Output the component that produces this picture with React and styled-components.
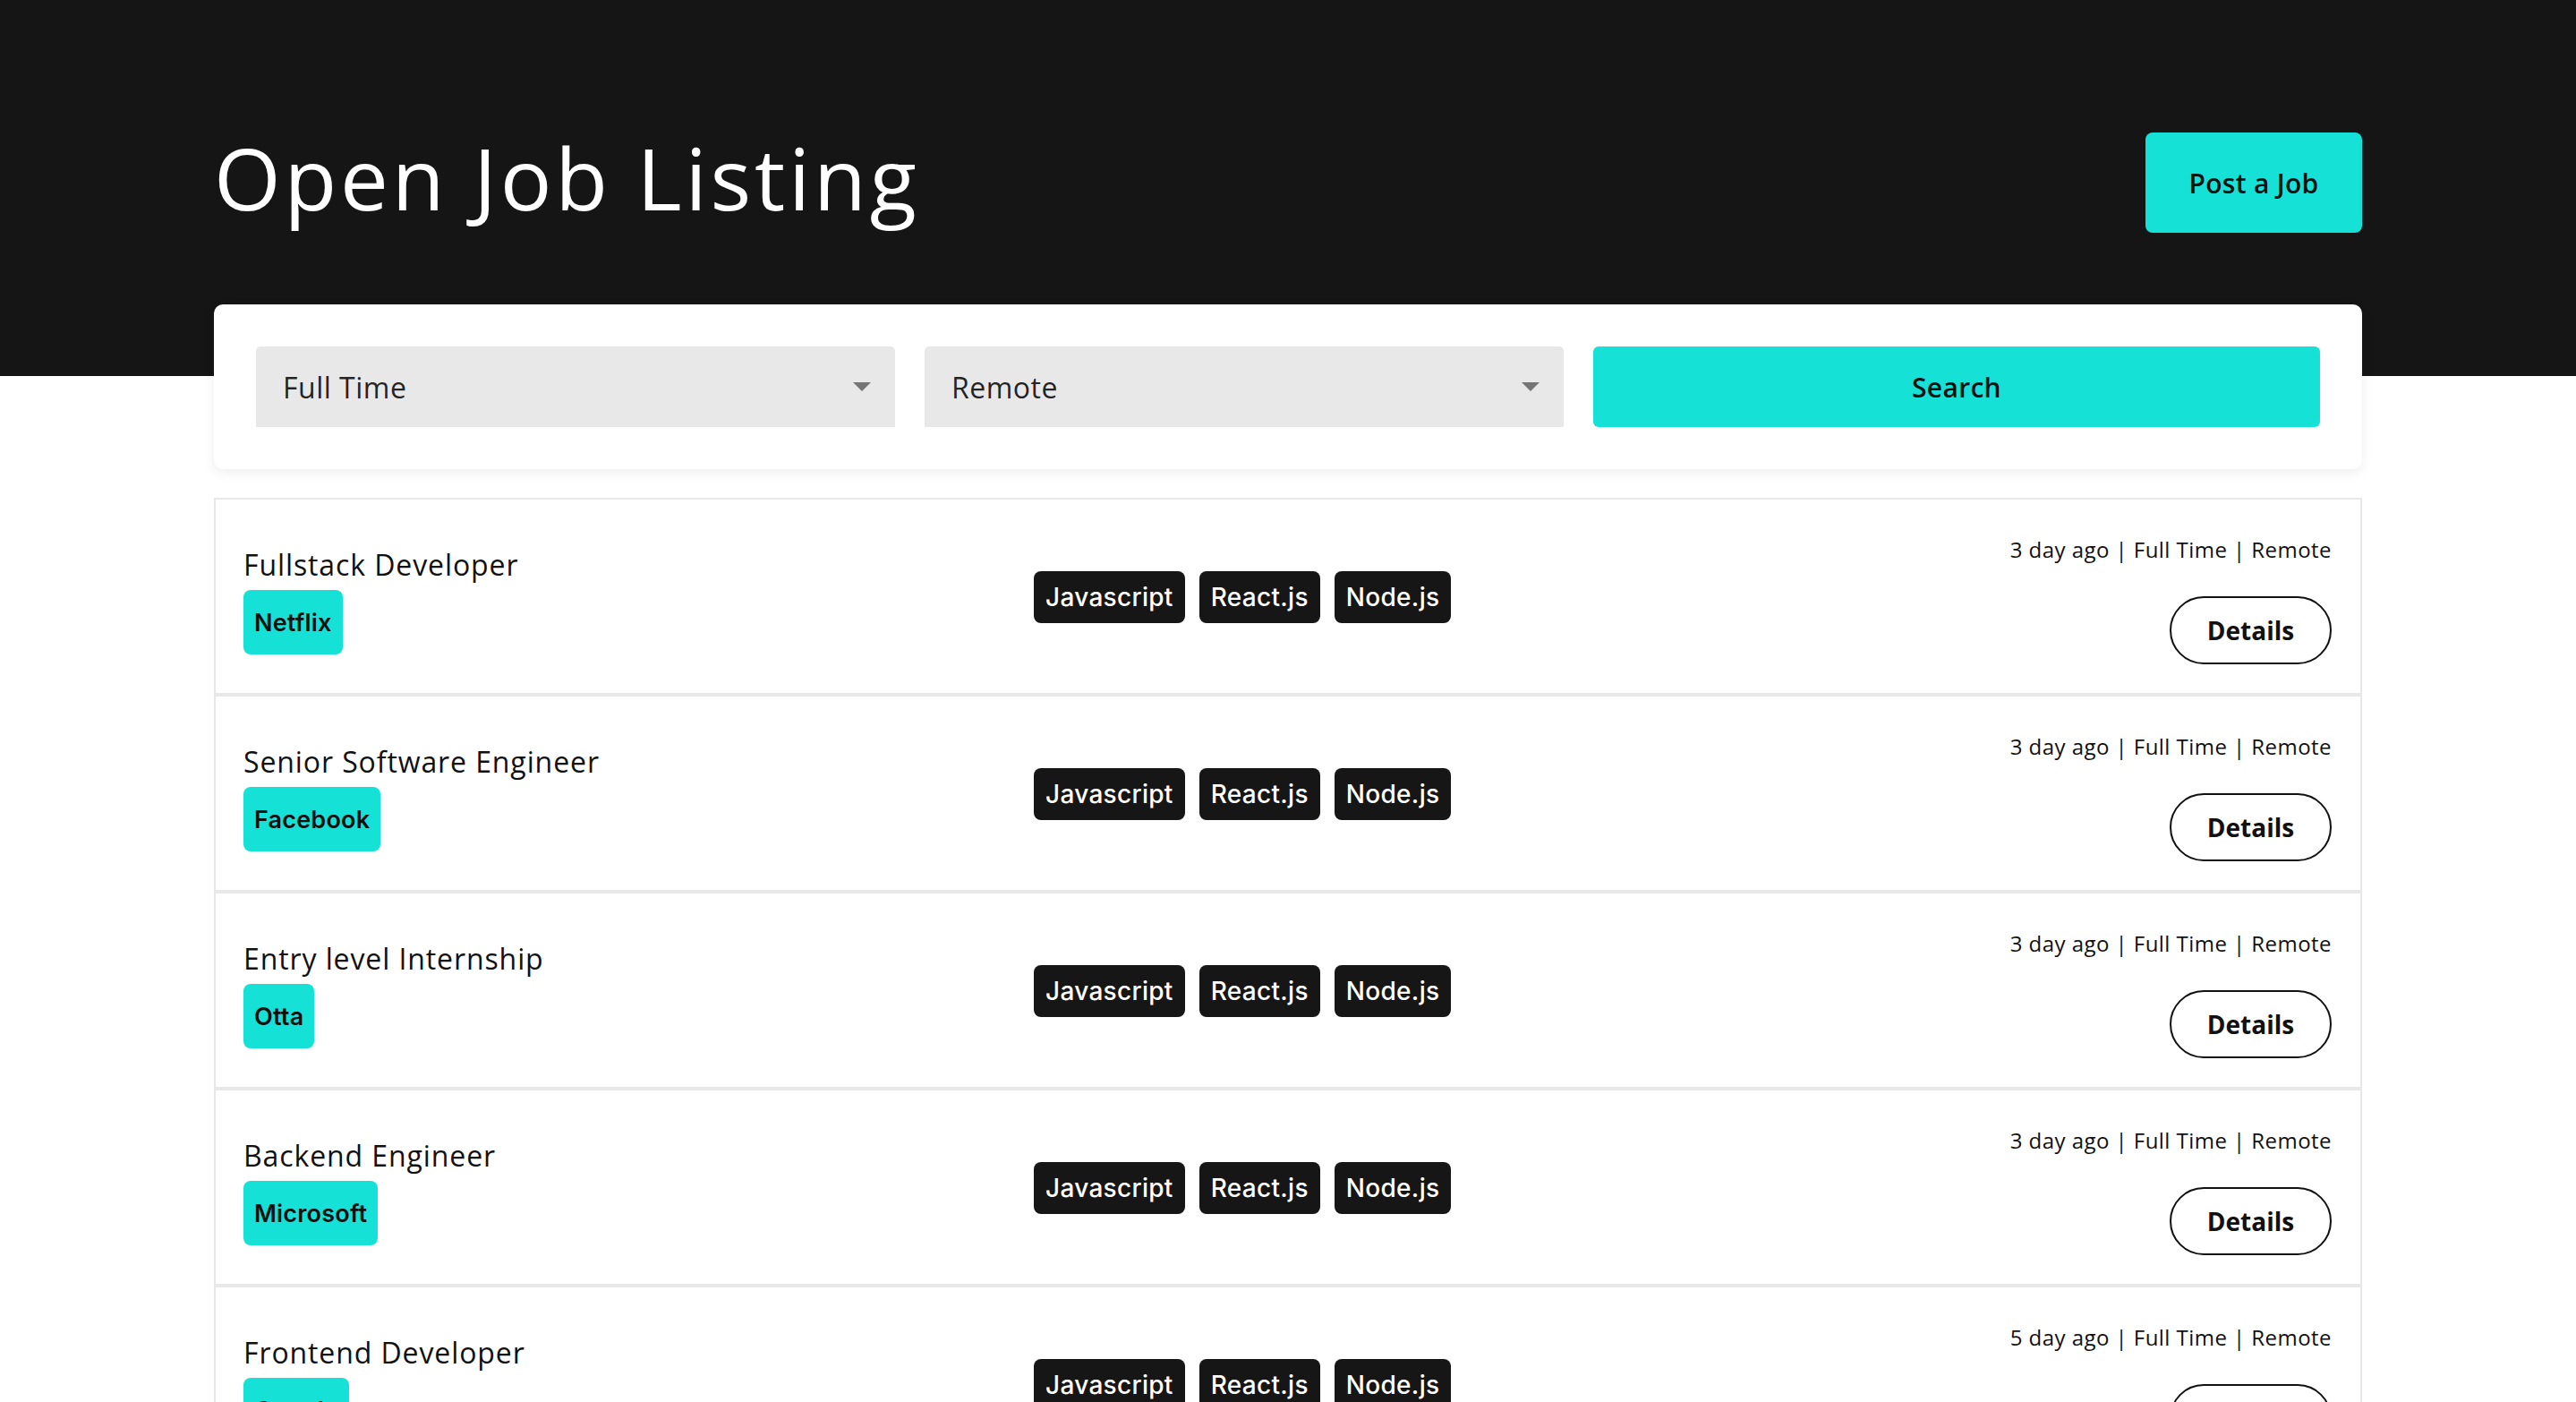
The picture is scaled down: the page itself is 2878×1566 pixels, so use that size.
import React from "react";
import styled, { createGlobalStyle } from "styled-components";

const jobs = [
  { title: "Fullstack Developer", company: "Netflix", posted: "3 day ago" },
  { title: "Senior Software Engineer", company: "Facebook", posted: "3 day ago" },
  { title: "Entry level Internship", company: "Otta", posted: "3 day ago" },
  { title: "Backend Engineer", company: "Microsoft", posted: "3 day ago" },
  { title: "Frontend Developer", company: "Google", posted: "5 day ago" },
  { title: "UI Developer", company: "Spotify", posted: "6 day ago" },
];

const skills = ["Javascript", "React.js", "Node.js"];

const App = () => {
  return (
    <Page>
      <GlobalStyle />
      <Container>
        <Header>
          <Title>Open Job Listing</Title>
          <PostButton>Post a Job</PostButton>
        </Header>

        <SearchCard>
          <Select>
            <span>Full Time</span>
            <Arrow />
          </Select>
          <Select>
            <span>Remote</span>
            <Arrow />
          </Select>
          <SearchButton>Search</SearchButton>
        </SearchCard>

        <JobList>
          {jobs.map((job) => (
            <JobRow key={job.title}>
              <JobInfo>
                <JobTitle>{job.title}</JobTitle>
                <Company>{job.company}</Company>
              </JobInfo>
              <Skills>
                {skills.map((s) => (
                  <Skill key={s}>{s}</Skill>
                ))}
              </Skills>
              <JobMeta>
                <MetaText>{job.posted} | Full Time | Remote</MetaText>
                <DetailsButton>Details</DetailsButton>
              </JobMeta>
            </JobRow>
          ))}
        </JobList>
      </Container>
    </Page>
  );
};

const Arrow = () => (
  <svg width="20" height="10" viewBox="0 0 20 10">
    <path d="M0 0h20L10 10z" fill="#757575" />
  </svg>
);

export default App;

const GlobalStyle = createGlobalStyle`
  * {
    box-sizing: border-box;
  }

  body {
    margin: 0;
    font-family: "Open Sans", "DejaVu Sans", sans-serif;
    color: #111;
    background: #fff;
  }
`;

const Page = styled.div`
  min-height: 100vh;
  background: linear-gradient(#151515 420px, #fff 420px);
`;

const Container = styled.div`
  width: 2400px;
  margin: 0 auto;
  padding-top: 148px;
`;

const Header = styled.div`
  display: flex;
  justify-content: space-between;
  align-items: center;
  height: 112px;
  margin-bottom: 80px;
`;

const Title = styled.h1`
  margin: 0 0 14px;
  color: #fff;
  font-size: 96px;
  font-weight: 400;
  letter-spacing: 3.8px;
`;

const PostButton = styled.button`
  width: 242px;
  height: 112px;
  border: none;
  border-radius: 8px;
  background: #16e1d6;
  color: #111;
  font-family: "Open Sans", sans-serif;
  font-size: 30px;
  font-weight: 600;
  letter-spacing: 0.3px;
  cursor: pointer;
`;

const SearchCard = styled.div`
  display: grid;
  grid-template-columns: 714px 714px 1fr;
  gap: 33px;
  padding: 47px;
  border-radius: 10px;
  background: #fff;
  box-shadow: 0 4px 14px rgba(0, 0, 0, 0.07);
`;

const Select = styled.div`
  display: flex;
  justify-content: space-between;
  align-items: center;
  height: 90px;
  padding: 0 27px 0 30px;
  border-radius: 5px 5px 0 0;
  background: #e8e8e8;
  color: rgba(0, 0, 0, 0.87);
  font-size: 32px;
  letter-spacing: 0.5px;
`;

const SearchButton = styled.button`
  height: 90px;
  border: none;
  border-radius: 6px;
  background: #16e1d6;
  color: #111;
  font-family: "Open Sans", sans-serif;
  font-size: 30px;
  font-weight: 600;
  letter-spacing: 0.3px;
  cursor: pointer;
`;

const JobList = styled.div`
  display: flex;
  flex-direction: column;
  margin-top: 32px;
`;

const JobRow = styled.div`
  display: grid;
  grid-template-columns: 883px 1fr auto;
  align-items: center;
  height: 220px;
  padding: 6px 32px 0 31px;
  border: 2px solid #e8e8e8;
  background: #fff;
`;

const JobInfo = styled.div`
  display: flex;
  flex-direction: column;
  align-items: flex-start;
  gap: 4px;
`;

const JobTitle = styled.div`
  font-size: 32px;
  line-height: 1.5;
  letter-spacing: 0.9px;
`;

const Company = styled.span`
  display: inline-flex;
  align-items: center;
  height: 72px;
  padding: 0 12px;
  border-radius: 8px;
  background: #16e1d6;
  font-family: "Inter", sans-serif;
  font-size: 27px;
  font-weight: 600;
  letter-spacing: 0.2px;
`;

const Skills = styled.div`
  display: flex;
  gap: 16px;
  margin-bottom: 4px;
`;

const Skill = styled.span`
  display: inline-flex;
  align-items: center;
  height: 58px;
  padding: 0 13px;
  border-radius: 8px;
  background: #161616;
  color: #fff;
  font-family: "Inter", sans-serif;
  font-size: 28px;
  font-weight: 500;
  letter-spacing: 0.3px;
`;

const JobMeta = styled.div`
  display: flex;
  flex-direction: column;
  align-items: flex-end;
  gap: 34px;
`;

const MetaText = styled.div`
  font-size: 24px;
  line-height: 1.5;
  letter-spacing: 0.45px;
`;

const DetailsButton = styled.button`
  width: 181px;
  height: 76px;
  border: 2px solid #111;
  border-radius: 40px;
  background: #fff;
  color: #111;
  font-family: "Open Sans", sans-serif;
  font-size: 28px;
  font-weight: 700;
  cursor: pointer;
`;
